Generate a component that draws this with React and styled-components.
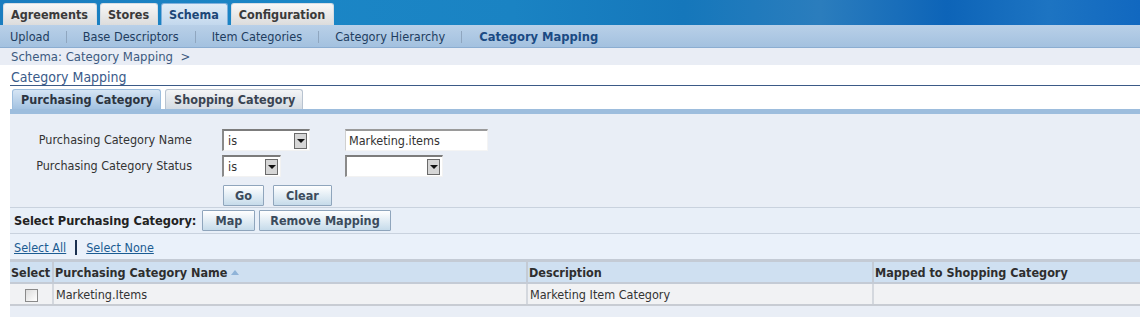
import React from "react";
import styled, { createGlobalStyle } from "styled-components";

const GlobalStyle = createGlobalStyle`
  body {
    margin: 0;
    background: #fff;
    font-family: "DejaVu Sans Condensed", "Liberation Sans", sans-serif;
    font-size: 12.5px;
    color: #333;
  }
`;

const TopBar = styled.div`
  height: 25px;
  display: flex;
  align-items: flex-end;
  gap: 3px;
  padding-left: 3px;
  background: linear-gradient(
    90deg,
    #1a7dbf 0%,
    #1b86c6 25%,
    #1a83c3 45%,
    #1577bb 60%,
    #2b7dbd 72%,
    #0d64b8 83%,
    #1d74c2 92%,
    #1168c0 100%
  );
`;

const Tab = styled.div`
  height: 22px;
  box-sizing: border-box;
  padding: 0 8px 0 7px;
  display: flex;
  align-items: center;
  border: 1px solid ${(p) => (p.$active ? "#7fb0dc" : "#d6dde4")};
  border-bottom: none;
  border-radius: 3px 3px 0 0;
  background: ${(p) =>
    p.$active
      ? "linear-gradient(#e0ecf7, #c3d8ed)"
      : "linear-gradient(#f7f7f7, #dcdcdc)"};
  color: ${(p) => (p.$active ? "#1c4677" : "#3a3a3a")};
  font-weight: bold;
  font-size: 12.5px;
`;

const SubNav = styled.div`
  height: 23px;
  box-sizing: border-box;
  padding: 1px 0 0 10px;
  display: flex;
  align-items: center;
  gap: 16px;
  background: linear-gradient(#b9d0e8, #a3c1df);
  border-bottom: 1px solid #8badd1;
`;

const NavItem = styled.span`
  color: ${(p) => (p.$active ? "#1a4a83" : "#1e3d60")};
  font-weight: ${(p) => (p.$active ? "bold" : "normal")};
  font-size: ${(p) => (p.$active ? 12.8 : 12.6)}px;
  margin-left: ${(p) => (p.$active ? 1 : 0)}px;
`;

const NavSep = styled.span`
  width: 1px;
  height: 12px;
  background: #8fa6bf;
`;

const Crumbs = styled.div`
  height: 17px;
  line-height: 17px;
  padding-left: 11px;
  background: #e9edf5;
  color: #3c5a80;
  font-size: 13px;
`;

const Main = styled.div`
  padding-left: 10px;
`;

const PageTitle = styled.div`
  padding: 4px 0 0 1px;
  height: 16px;
  line-height: 16px;
  color: #3a5b8a;
  font-size: 14px;
  border-bottom: 1px solid #3b5a87;
`;

const TabStrip = styled.div`
  margin-top: 3px;
  display: flex;
  align-items: flex-end;
  gap: 4px;
  padding-left: 2px;
  border-bottom: 5px solid #9dbddd;
`;

const SubTab = styled.div`
  height: 20px;
  box-sizing: border-box;
  padding: 0 7px 0 8px;
  display: flex;
  align-items: center;
  border: 1px solid ${(p) => (p.$active ? "#9dbddd" : "#b8c3d0")};
  border-bottom: none;
  border-radius: 3px 3px 0 0;
  background: ${(p) =>
    p.$active
      ? "linear-gradient(#d6e5f4, #a3c2e1)"
      : "linear-gradient(#f4f5f6, #d4dbe3)"};
  color: ${(p) => (p.$active ? "#2c3440" : "#3a4452")};
  font-weight: bold;
  font-size: 12.5px;
`;

const SearchPanel = styled.div`
  background: #e9eef6;
  padding: 15px 0 1px;
  border-bottom: 1px solid #c9d2de;
  display: grid;
  grid-template-columns: 182px 93px 1fr;
  column-gap: 30px;
  row-gap: 4px;
  align-items: center;
`;

const Label = styled.div`
  justify-self: end;
  color: #333;
  margin-top: -2px;
`;

const Select = styled.div`
  width: ${(p) => p.$w}px;
  height: 22px;
  box-sizing: border-box;
  display: flex;
  align-items: center;
  justify-content: space-between;
  background: #fff;
  border-style: solid;
  border-width: 2px 1px 1px 2px;
  border-color: #7c7c7c #f2f2f2 #f2f2f2 #8a8a8a;
  padding: 0 2px 0 4px;
`;

const Arrow = styled.span`
  width: 13px;
  height: 16px;
  box-sizing: border-box;
  display: flex;
  align-items: center;
  justify-content: center;
  background: #d6d6d6;
  border: 1px solid #6a6a6a;
  &::after {
    content: "";
    border-left: 4px solid transparent;
    border-right: 4px solid transparent;
    border-top: 4px solid #111;
  }
`;

const TextBox = styled.div`
  width: ${(p) => p.$w}px;
  height: 22px;
  box-sizing: border-box;
  display: flex;
  align-items: center;
  background: #fff;
  border-style: solid;
  border-width: 2px 1px 1px 1px;
  border-color: #9a9a9a #f4f4f4 #f4f4f4 #d0d0d0;
  padding-left: 3px;
`;

const ButtonRow = styled.div`
  grid-column: 2 / 4;
  display: flex;
  gap: 9px;
  margin: 4px 0 0 1px;
`;

const Button = styled.button`
  height: 21px;
  padding: 0 ${(p) => p.$pad || 12}px;
  font-family: inherit;
  font-weight: bold;
  font-size: 12.5px;
  color: #3b4b5c;
  background: linear-gradient(#ffffff, #c6dbea);
  border: 1px solid #8fa5bc;
  border-radius: 1px;
  cursor: pointer;
`;

const ActionBar = styled.div`
  height: 25px;
  display: flex;
  align-items: center;
  gap: 4px;
  padding-left: 4px;
  background: #e8eff8;
  border-bottom: 1px solid #c9d2de;
`;

const ActionLabel = styled.span`
  font-weight: bold;
  font-size: 12.7px;
  color: #222;
  margin-right: 2px;
`;

const LinksRow = styled.div`
  height: 23px;
  display: flex;
  align-items: center;
  padding: 2px 0 0 4px;
  background: #eaf1fa;
`;

const Link = styled.a`
  color: #1b5c92;
  text-decoration: underline;
  cursor: pointer;
`;

const LinkBar = styled.span`
  width: 2px;
  height: 15px;
  margin: 0 9px;
  background: #1a3050;
`;

const Table = styled.table`
  width: 100%;
  border-collapse: collapse;
  border-top: 3px solid #c4cbd5;
  font-size: 12.5px;
`;

const Th = styled.th`
  height: 20px;
  padding: 0 1px;
  text-align: left;
  background: #cfe0f1;
  color: #2e2e2e;
  font-weight: bold;
  border-left: 2px solid #c4cbd5;
  border-bottom: 2px solid #c4cbd5;
  white-space: nowrap;
  width: ${(p) => (p.$w ? `${p.$w}px` : "auto")};
  &:first-child {
    border-left: none;
  }
`;

const Td = styled.td`
  height: 20px;
  padding: 0 2px;
  background: #f1f2f4;
  color: #333;
  border-left: 2px solid #d4d8de;
  border-bottom: 2px solid #c8ccd3;
  text-align: ${(p) => p.$align || "left"};
  &:first-child {
    border-left: none;
  }
`;

const SortMark = styled.span`
  display: inline-block;
  margin-left: 4px;
  vertical-align: 2px;
  border-left: 4px solid transparent;
  border-right: 4px solid transparent;
  border-bottom: 5px solid #8fb3d8;
`;

const Check = styled.input`
  appearance: none;
  width: 13px;
  height: 13px;
  margin: 0;
  vertical-align: middle;
  border: 1px solid #8a8a8a;
  background: linear-gradient(135deg, #dcdcdc, #ffffff);
`;

const TableFoot = styled.div`
  height: 11px;
  background: #e9eef6;
`;

export default function App() {
  const tabs = ["Agreements", "Stores", "Schema", "Configuration"];
  const nav = [
    "Upload",
    "Base Descriptors",
    "Item Categories",
    "Category Hierarchy",
    "Category Mapping",
  ];
  return (
    <>
      <GlobalStyle />
      <TopBar>
        {tabs.map((t) => (
          <Tab key={t} $active={t === "Schema"}>
            {t}
          </Tab>
        ))}
      </TopBar>
      <SubNav>
        {nav.map((n, i) => (
          <React.Fragment key={n}>
            {i > 0 && <NavSep />}
            <NavItem $active={n === "Category Mapping"}>{n}</NavItem>
          </React.Fragment>
        ))}
      </SubNav>
      <Crumbs>Schema: Category Mapping&nbsp; &gt;</Crumbs>
      <Main>
        <PageTitle>Category Mapping</PageTitle>
        <TabStrip>
          <SubTab $active>Purchasing Category</SubTab>
          <SubTab>Shopping Category</SubTab>
        </TabStrip>
        <SearchPanel>
          <Label>Purchasing Category Name</Label>
          <Select $w={88}>
            is <Arrow />
          </Select>
          <TextBox $w={143}>Marketing.items</TextBox>
          <Label>Purchasing Category Status</Label>
          <Select $w={59}>
            is <Arrow />
          </Select>
          <Select $w={98}>
            <span /> <Arrow />
          </Select>
          <span />
          <ButtonRow>
            <Button $pad={11}>Go</Button>
            <Button $pad={12}>Clear</Button>
          </ButtonRow>
        </SearchPanel>
        <ActionBar>
          <ActionLabel>Select Purchasing Category:</ActionLabel>
          <Button $pad={12}>Map</Button>
          <Button $pad={10}>Remove Mapping</Button>
        </ActionBar>
        <LinksRow>
          <Link>Select All</Link>
          <LinkBar />
          <Link>Select None</Link>
        </LinksRow>
        <Table>
          <thead>
            <tr>
              <Th $w={40}>Select</Th>
              <Th $w={470}>
                Purchasing Category Name
                <SortMark />
              </Th>
              <Th $w={342}>Description</Th>
              <Th>Mapped to Shopping Category</Th>
            </tr>
          </thead>
          <tbody>
            <tr>
              <Td $align="center">
                <Check type="checkbox" />
              </Td>
              <Td>Marketing.Items</Td>
              <Td>Marketing Item Category</Td>
              <Td />
            </tr>
          </tbody>
        </Table>
        <TableFoot />
      </Main>
    </>
  );
}
